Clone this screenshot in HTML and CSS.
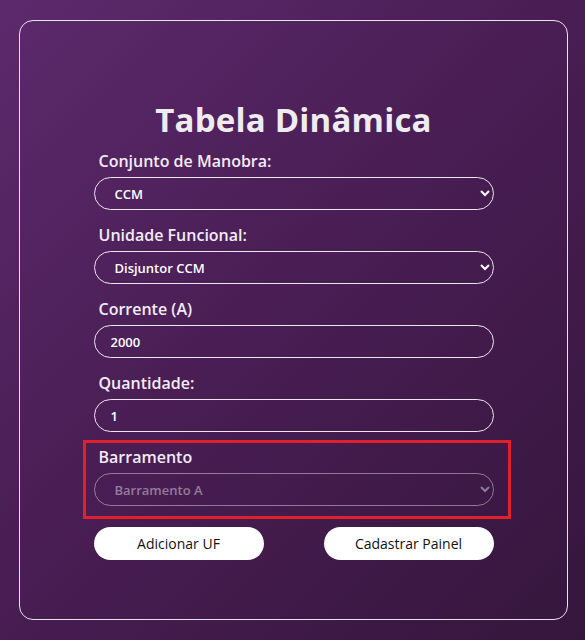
FILE: index.html
```html
<!DOCTYPE html>
<html lang="pt-BR">
<head>
<meta charset="utf-8">
<title>Tabela Dinâmica</title>
<link rel="stylesheet" href="styles.css">
</head>
<body>
<main class="card">
  <h1 class="title">Tabela Dinâmica</h1>
  <form class="form">
    <div class="group">
      <label class="label" for="conjunto">Conjunto de Manobra:</label>
      <select class="field" id="conjunto"><option>CCM</option></select>
    </div>
    <div class="group">
      <label class="label" for="uf">Unidade Funcional:</label>
      <select class="field" id="uf"><option>Disjuntor CCM</option></select>
    </div>
    <div class="group">
      <label class="label" for="corrente">Corrente (A)</label>
      <input class="field input" id="corrente" type="text" value="2000">
    </div>
    <div class="group">
      <label class="label" for="qtd">Quantidade:</label>
      <input class="field input" id="qtd" type="text" value="1">
    </div>
    <div class="group highlight">
      <label class="label" for="barr">Barramento</label>
      <select class="field muted" id="barr" disabled><option>Barramento A</option></select>
    </div>
    <div class="actions">
      <button type="button" class="btn">Adicionar UF</button>
      <button type="button" class="btn">Cadastrar Painel</button>
    </div>
  </form>
</main>
</body>
</html>
```

FILE: styles.css
```css
* { box-sizing: border-box; }
html, body { height: 100%; }
body {
  margin: 0;
  min-height: 640px;
  background: linear-gradient(135deg, #5c2a6c 0%, #4a1e55 45%, #35163c 100%);
  font-family: "Open Sans", "DejaVu Sans", sans-serif;
  color: #f2eef4;
  padding: 20px 17px 20px 19px;
}
.card {
  width: 549px;
  height: 600px;
  border: 1px solid #e9e2ee;
  border-radius: 14px;
  padding-top: 77px;
}
.title {
  margin: 0 0 8px;
  text-align: center;
  font-size: 33px;
  font-weight: 700;
  line-height: 44px;
  letter-spacing: 0.2px;
  color: #efecf0;
}
.form {
  width: 400px;
  margin: 0 auto;
  display: flex;
  flex-direction: column;
}
.group {
  display: flex;
  flex-direction: column;
  margin-bottom: 14px;
}
.group:nth-child(4) { margin-bottom: 8px; }
.label {
  font-size: 16px;
  font-weight: 600;
  line-height: 22px;
  margin: 0 0 5px 5px;
  color: #f1ecf3;
}
.field {
  height: 33px;
  width: 400px;
  border: 1px solid #ece6ef;
  border-radius: 17px;
  background: transparent;
  color: #ffffff;
  font-family: "Open Sans", "DejaVu Sans", sans-serif;
  font-size: 13px;
  font-weight: 600;
  padding: 0 12px 0 16px;
  outline: none;
}
.muted { color: rgba(255, 255, 255, 0.6); border-color: rgba(255,255,255,0.6); }
.highlight {
  margin: 0 -17px 8px -11px;
  border: 3px solid #e0202a;
  padding: 3px 14px 10px 8px;
}
.actions {
  display: flex;
  justify-content: space-between;
}
.btn {
  width: 170px;
  height: 33px;
  border: none;
  border-radius: 17px;
  background: #ffffff;
  color: #111111;
  font-family: "Open Sans", "DejaVu Sans", sans-serif;
  font-size: 14px;
  font-weight: 500;
}
```
